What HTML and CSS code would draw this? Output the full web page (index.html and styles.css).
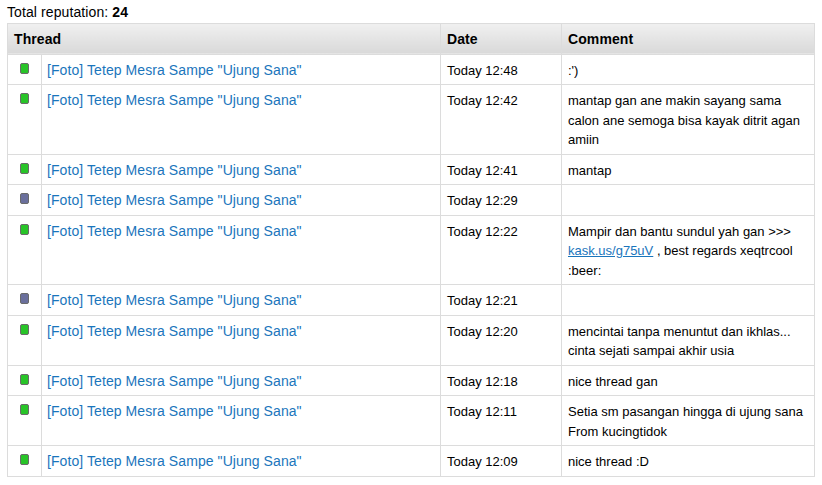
FILE: index.html
```html
<!DOCTYPE html>
<html>
<head>
<meta charset="utf-8">
<title>Reputation</title>
<link rel="stylesheet" href="styles.css">
</head>
<body>
<div class="total">Total reputation: <strong>24</strong></div>
<table class="rep">
<colgroup><col class="c1"><col class="c2"><col class="c3"><col class="c4"></colgroup>
<thead><tr><th colspan="2">Thread</th><th>Date</th><th>Comment</th></tr></thead>
<tbody>
<tr><td class="ic"><span class="dot pos"></span></td><td><a class="thread" href="#">[Foto] Tetep Mesra Sampe "Ujung Sana"</a></td><td>Today 12:48</td><td>:')</td></tr>
<tr><td class="ic"><span class="dot pos"></span></td><td><a class="thread" href="#">[Foto] Tetep Mesra Sampe "Ujung Sana"</a></td><td>Today 12:42</td><td>mantap gan ane makin sayang sama calon ane semoga bisa kayak ditrit agan amiin</td></tr>
<tr><td class="ic"><span class="dot pos"></span></td><td><a class="thread" href="#">[Foto] Tetep Mesra Sampe "Ujung Sana"</a></td><td>Today 12:41</td><td>mantap</td></tr>
<tr><td class="ic"><span class="dot neu"></span></td><td><a class="thread" href="#">[Foto] Tetep Mesra Sampe "Ujung Sana"</a></td><td>Today 12:29</td><td></td></tr>
<tr><td class="ic"><span class="dot pos"></span></td><td><a class="thread" href="#">[Foto] Tetep Mesra Sampe "Ujung Sana"</a></td><td>Today 12:22</td><td>Mampir dan bantu sundul yah gan &gt;&gt;&gt; <a class="inline" href="#">kask.us/g75uV</a> , best regards xeqtrcool :beer:</td></tr>
<tr><td class="ic"><span class="dot neu"></span></td><td><a class="thread" href="#">[Foto] Tetep Mesra Sampe "Ujung Sana"</a></td><td>Today 12:21</td><td></td></tr>
<tr><td class="ic"><span class="dot pos"></span></td><td><a class="thread" href="#">[Foto] Tetep Mesra Sampe "Ujung Sana"</a></td><td>Today 12:20</td><td>mencintai tanpa menuntut dan ikhlas... cinta sejati sampai akhir usia</td></tr>
<tr><td class="ic"><span class="dot pos"></span></td><td><a class="thread" href="#">[Foto] Tetep Mesra Sampe "Ujung Sana"</a></td><td>Today 12:18</td><td>nice thread gan</td></tr>
<tr><td class="ic"><span class="dot pos"></span></td><td><a class="thread" href="#">[Foto] Tetep Mesra Sampe "Ujung Sana"</a></td><td>Today 12:11</td><td>Setia sm pasangan hingga di ujung sana<br>From kucingtidok</td></tr>
<tr><td class="ic"><span class="dot pos"></span></td><td><a class="thread" href="#">[Foto] Tetep Mesra Sampe "Ujung Sana"</a></td><td>Today 12:09</td><td>nice thread :D</td></tr>
</tbody>
</table>
</body>
</html>
```
FILE: styles.css
```css
html, body { margin: 0; padding: 0; background: #fff; }
body { padding: 4px 8px 0 7px; font-family: "Liberation Sans", Arial, sans-serif; font-size: 13px; color: #000; }
.total { font-size: 14px; line-height: 16px; height: 18.75px; letter-spacing: 0.1px; }
.rep { border-collapse: collapse; table-layout: fixed; width: 807px; line-height: 19.5px; }
.c1 { width: 34px; }
.c2 { width: 399px; }
.c3 { width: 121px; }
.c4 { width: 253px; }
.rep th, .rep td { border: 1px solid #dcdcdc; padding: 5.75px 6px 4.25px; text-align: left; vertical-align: top; }
.rep th { height: 29px; padding: 1px 6px 0; font-size: 14px; letter-spacing: 0.1px; vertical-align: middle; background: linear-gradient(#f0f0f0, #d9d9d9); }
.rep td.ic { padding: 8px 0 0 12px; line-height: 0; }
.thread { font-size: 14px; letter-spacing: 0.08px; margin-left: -1px; color: #1a75bc; text-decoration: none; }
.inline { color: #1a75bc; }
.dot { display: inline-block; width: 7px; height: 9px; border: 1px solid #6a6a6a; border-radius: 2px; box-sizing: content-box; }
.pos { background: #28c428; }
.neu { background: #6a6f9c; }
```
